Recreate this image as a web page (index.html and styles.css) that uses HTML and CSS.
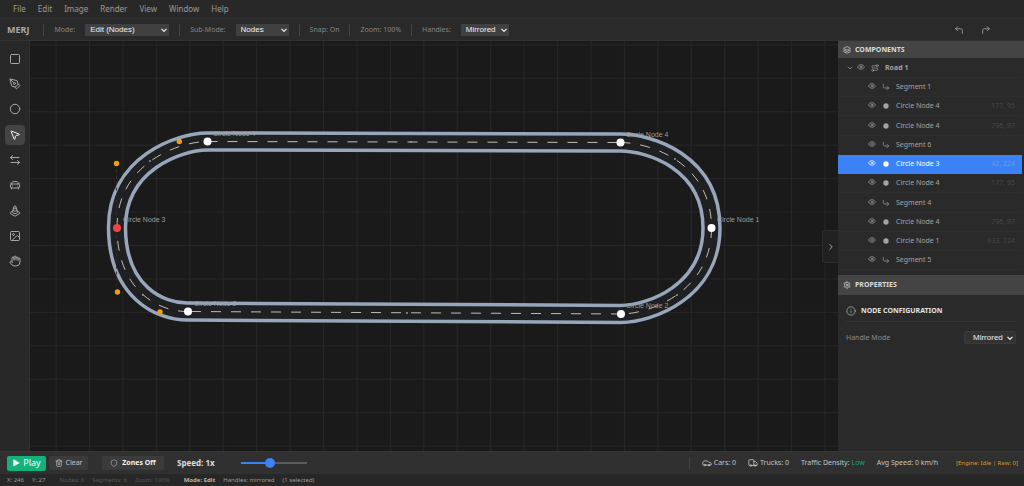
FILE: index.html
```html
<!DOCTYPE html>
<html lang="en">
<head>
<meta charset="utf-8">
<title>MERJ</title>
<link rel="stylesheet" href="styles.css">
</head>
<body>
<svg class="sprite" aria-hidden="true">
  <symbol id="eye" viewBox="0 0 24 24"><path d="M2 12.3a1 1 0 0 1 0-.7 10.8 10.8 0 0 1 20 0 1 1 0 0 1 0 .7 10.8 10.8 0 0 1-20 0"/><circle cx="12" cy="12" r="3"/></symbol>
  <symbol id="corner" viewBox="0 0 24 24"><path d="m15 10 5 5-5 5"/><path d="M4 4v7a4 4 0 0 0 4 4h12"/></symbol>
  <symbol id="dot" viewBox="0 0 24 24"><circle cx="12" cy="12" r="8" fill="currentColor" stroke="none"/></symbol>
  <symbol id="route" viewBox="0 0 24 24"><circle cx="5" cy="19" r="3"/><circle cx="19" cy="5" r="3"/><path d="M8 19h9.500a3.500 3.500 0 0 0 0-7h-11a3.500 3.500 0 0 1 0-7H16"/></symbol>
</svg>

<div class="app">
  <nav class="menubar">
    <button>File</button><button>Edit</button><button>Image</button><button>Render</button><button>View</button><button>Window</button><button>Help</button>
  </nav>

  <header class="toolbar">
    <strong class="brand">MERJ</strong>
    <i class="sep"></i>
    <label for="mode">Mode:</label>
    <select id="mode" class="select wide"><option>Edit (Nodes)</option></select>
    <i class="sep"></i>
    <label for="submode">Sub-Mode:</label>
    <select id="submode" class="select medium"><option>Nodes</option></select>
    <i class="sep"></i>
    <span class="snap">Snap: On</span>
    <i class="sep"></i>
    <span class="zoom">Zoom: 100%</span>
    <i class="sep"></i>
    <label for="handles">Handles:</label>
    <select id="handles" class="select small"><option>Mirrored</option></select>
    <div class="history">
      <button aria-label="Undo"><svg class="icon i10" viewBox="0 0 24 24"><path d="M9 14 4 9l5-5"/><path d="M20 20v-7a4 4 0 0 0-4-4H4"/></svg></button>
      <button aria-label="Redo"><svg class="icon i10" viewBox="0 0 24 24"><path d="m15 14 5-5-5-5"/><path d="M4 20v-7a4 4 0 0 1 4-4h12"/></svg></button>
    </div>
  </header>

  <main class="workspace">
    <aside class="tools">
      <div class="tool-group">
        <button aria-label="Rectangle"><svg class="icon i12" viewBox="0 0 24 24"><rect x="3" y="3" width="18" height="18" rx="2"/></svg></button>
        <button aria-label="Pen"><svg class="icon i12" viewBox="0 0 24 24"><path d="M15.700 21.300a1 1 0 0 1-1.400 0l-1.600-1.600a1 1 0 0 1 0-1.400l5.600-5.600a1 1 0 0 1 1.400 0l1.600 1.600a1 1 0 0 1 0 1.400z"/><path d="m18 13-1.400-6.900a1 1 0 0 0-.7-.7L3.200 2a1 1 0 0 0-1.200 1.200l3.500 12.700a1 1 0 0 0 .7.7L13 18"/><path d="m2.300 2.300 7.300 7.300"/><circle cx="11" cy="11" r="2"/></svg></button>
        <button aria-label="Circle"><svg class="icon i12" viewBox="0 0 24 24"><circle cx="12" cy="12" r="9.500"/></svg></button>
      </div>
      <div class="tool-group">
        <button class="active" aria-label="Select"><svg class="icon i12" viewBox="0 0 24 24"><path d="M4 4.700a.5.5 0 0 1 .7-.7l16 6.500a.5.5 0 0 1-.1.900l-6.100 1.600a2 2 0 0 0-1.400 1.400l-1.600 6.100a.5.5 0 0 1-.9.100z"/></svg></button>
        <button aria-label="Direction"><svg class="icon i12" viewBox="0 0 24 24"><path d="m7 3-4 4 4 4M3 7h17M17 13l4 4-4 4M21 17H4"/></svg></button>
        <button aria-label="Vehicles"><svg class="icon i12" viewBox="0 0 24 24"><path d="m21 8-2 2-1.500-3.700A2 2 0 0 0 15.600 5H8.400a2 2 0 0 0-1.900 1.300L5 10 3 8M7 14h.01M17 14h.01"/><rect x="3" y="10" width="18" height="8" rx="2"/><path d="M5 18v2M19 18v2"/></svg></button>
      </div>
      <div class="tool-group">
        <button aria-label="Cones"><svg class="icon i12" viewBox="0 0 24 24"><path d="M9.300 6.200a4.600 4.600 0 0 0 5.400 0M7.900 10.700c.9.800 2.400 1.300 4.100 1.300s3.200-.5 4.100-1.300M13.900 3.500a1.900 1.900 0 0 0-3.800-.1l-3 10c-.1.200-.1.400-.1.600 0 1.700 2.200 3 5 3s5-1.300 5-3c0-.2 0-.4-.1-.5Z"/><path d="m7.500 12.200-4.700 2.700c-.5.300-.8.700-.8 1.100s.3.800.8 1.100l7.600 4.500c.9.500 2.100.5 3 0l7.600-4.500c.7-.3 1-.7 1-1.100s-.3-.8-.8-1.100l-4.700-2.800"/></svg></button>
        <button aria-label="Image"><svg class="icon i12" viewBox="0 0 24 24"><rect x="3" y="3" width="18" height="18" rx="2"/><circle cx="9" cy="9" r="2"/><path d="m21 15-3.100-3.100a2 2 0 0 0-2.800 0L6 21"/></svg></button>
        <button aria-label="Pan"><svg class="icon i12" viewBox="0 0 24 24"><path d="M18 11V6a2 2 0 0 0-4 0M14 10V4a2 2 0 0 0-4 0v2M10 10.500V6a2 2 0 0 0-4 0v8"/><path d="M18 8a2 2 0 1 1 4 0v6a8 8 0 0 1-8 8h-2c-2.800 0-4.500-.9-6-2.300l-3.600-3.600a2 2 0 0 1 2.800-2.800L7 15"/></svg></button>
      </div>
    </aside>

    <section class="canvas">
      <svg class="scene" role="img" aria-label="Road network">
        <defs>
          <pattern id="grid" x="25.600" y="3.400" width="33.430" height="33.430" patternUnits="userSpaceOnUse">
            <path class="grid-line" d="M.5 0V34M0 .5H34"/>
          </pattern>
          <path id="loop" d="M177.500 100.500 590.500 101.500C618 101.500 681.500 120 681.500 187C681.500 251 619 273 591 273L158 270.500C130 271 87.500 251 87 187C86.500 122.500 149 100.500 177.500 100.500Z"/>
        </defs>
        <rect width="100%" height="100%" fill="url(#grid)"/>
        <use href="#loop" class="road-edge"/>
        <use href="#loop" class="road-bed"/>
        <g class="lane">
          <path d="M177.500 100.500 590.500 101.500"/>
          <path d="M590.500 101.500C618 101.500 681.500 120 681.500 187"/>
          <path d="M681.500 187C681.500 251 619 273 591 273"/>
          <path d="M591 273 158 270.500"/>
          <path d="M158 270.500C130 271 87.500 251 87 187"/>
          <path d="M87 187C86.500 122.500 149 100.500 177.500 100.500"/>
        </g>
        <g class="mid">
          <circle cx="381" cy="101" r="1"/><circle cx="645" cy="118" r="1"/><circle cx="377" cy="272" r="1"/><circle cx="120" cy="120" r="1"/><circle cx="113" cy="254" r="1"/><circle cx="647" cy="254" r="1"/>
        </g>
        <path class="handle-line" d="M86.500 122.500V251"/>
        <g class="handle">
          <circle cx="149.300" cy="100.500" r="2.700"/><circle cx="86.500" cy="122.500" r="2.700"/><circle cx="87.500" cy="251" r="2.700"/><circle cx="130" cy="271" r="2.700"/>
        </g>
        <g class="label">
          <text x="183" y="95">Circle Node 4</text>
          <text x="596" y="96">Circle Node 4</text>
          <text x="687" y="181">Circle Node 1</text>
          <text x="596" y="267">Circle Node 2</text>
          <text x="164" y="265">Circle Node 2</text>
          <text x="93" y="181">Circle Node 3</text>
        </g>
        <g class="node">
          <circle cx="177.500" cy="100.500" r="4"/><circle cx="590.500" cy="101.500" r="4"/><circle cx="681.500" cy="187" r="4"/><circle cx="591" cy="273" r="4"/><circle cx="158" cy="270.500" r="4"/>
          <circle class="picked" cx="87" cy="187" r="4"/>
        </g>
      </svg>
      <button class="collapse" aria-label="Collapse panel"><svg class="icon i10" viewBox="0 0 24 24"><path d="m9 18 6-6-6-6"/></svg></button>
    </section>

    <aside class="panel">
      <section class="components">
        <h2><svg class="icon i8" viewBox="0 0 24 24"><path d="M12.800 2.200a2 2 0 0 0-1.600 0L2.600 6.100a1 1 0 0 0 0 1.800l8.600 3.900a2 2 0 0 0 1.600 0l8.600-3.900a1 1 0 0 0 0-1.800zM2 12l9.200 4.300a2 2 0 0 0 1.600 0L22 12M2 17l9.200 4.300a2 2 0 0 0 1.600 0L22 17"/></svg>COMPONENTS</h2>
        <ul class="tree">
          <li class="road"><svg class="icon i8 chevron" viewBox="0 0 24 24"><path d="m6 9 6 6 6-6"/></svg><svg class="icon i8 eye"><use href="#eye"/></svg><svg class="icon i8"><use href="#route"/></svg><span>Road 1</span></li>
          <li><svg class="icon i8 eye"><use href="#eye"/></svg><svg class="icon i8"><use href="#corner"/></svg><span>Segment 1</span></li>
          <li><svg class="icon i8 eye"><use href="#eye"/></svg><svg class="icon i8"><use href="#dot"/></svg><span>Circle Node 4</span><small>177, 95</small></li>
          <li><svg class="icon i8 eye"><use href="#eye"/></svg><svg class="icon i8"><use href="#dot"/></svg><span>Circle Node 4</span><small>796, 97</small></li>
          <li><svg class="icon i8 eye"><use href="#eye"/></svg><svg class="icon i8"><use href="#corner"/></svg><span>Segment 6</span></li>
          <li class="selected"><svg class="icon i8 eye"><use href="#eye"/></svg><svg class="icon i8"><use href="#dot"/></svg><span>Circle Node 3</span><small>42, 224</small></li>
          <li><svg class="icon i8 eye"><use href="#eye"/></svg><svg class="icon i8"><use href="#dot"/></svg><span>Circle Node 4</span><small>177, 95</small></li>
          <li><svg class="icon i8 eye"><use href="#eye"/></svg><svg class="icon i8"><use href="#corner"/></svg><span>Segment 4</span></li>
          <li><svg class="icon i8 eye"><use href="#eye"/></svg><svg class="icon i8"><use href="#dot"/></svg><span>Circle Node 4</span><small>796, 97</small></li>
          <li><svg class="icon i8 eye"><use href="#eye"/></svg><svg class="icon i8"><use href="#dot"/></svg><span>Circle Node 1</span><small>933, 224</small></li>
          <li><svg class="icon i8 eye"><use href="#eye"/></svg><svg class="icon i8"><use href="#corner"/></svg><span>Segment 5</span></li>
        </ul>
      </section>
      <section class="properties">
        <h2><svg class="icon i8" viewBox="0 0 24 24"><path d="M9.700 4.100a2.300 2.300 0 0 1 4.600 0 2.300 2.300 0 0 0 3.300 1.900 2.300 2.300 0 0 1 2.300 4 2.300 2.300 0 0 0 0 3.900 2.300 2.300 0 0 1-2.300 4 2.300 2.300 0 0 0-3.300 2 2.300 2.300 0 0 1-4.600 0 2.300 2.300 0 0 0-3.300-2 2.300 2.300 0 0 1-2.300-4 2.300 2.300 0 0 0 0-3.900 2.300 2.300 0 0 1 2.300-4 2.300 2.300 0 0 0 3.300-1.900"/><circle cx="12" cy="12" r="3"/></svg>PROPERTIES</h2>
        <div class="props-body">
          <h3><svg class="icon i10" viewBox="0 0 24 24"><circle cx="12" cy="12" r="10"/><path d="M12 16v-4M12 8h.01"/></svg>NODE CONFIGURATION</h3>
          <div class="field">
            <label for="handle-mode">Handle Mode</label>
            <select id="handle-mode" class="select dark"><option>Mirrored</option></select>
          </div>
        </div>
      </section>
    </aside>
  </main>

  <footer class="controls">
    <button class="btn play"><svg class="icon i8" viewBox="0 0 24 24"><path fill="currentColor" d="M5 3v18l16-9z"/></svg>Play</button>
    <button class="btn clear"><svg class="icon i8" viewBox="0 0 24 24"><path d="M3 6h18M19 6v14a2 2 0 0 1-2 2H7a2 2 0 0 1-2-2V6M8 6V4a2 2 0 0 1 2-2h4a2 2 0 0 1 2 2v2M10 11v6M14 11v6"/></svg>Clear</button>
    <button class="btn zones"><svg class="icon i8" viewBox="0 0 24 24"><path d="M20 13c0 5-3.500 7.500-7.700 9a1 1 0 0 1-.7 0C7.500 20.500 4 18 4 13V6a1 1 0 0 1 1-1c2 0 4.500-1.200 6.200-2.700a1.200 1.200 0 0 1 1.500 0C14.500 3.800 17 5 19 5a1 1 0 0 1 1 1z"/></svg>Zones Off</button>
    <label class="speed" for="speed">Speed: 1x</label>
    <input id="speed" class="slider" type="range" min="0" max="100" value="43">
    <div class="stats">
      <i class="sep"></i>
      <span class="stat"><svg class="icon i10" viewBox="0 0 24 24"><path d="M19 17h2c.6 0 1-.4 1-1v-3c0-.9-.7-1.700-1.500-1.900C18.700 10.600 16 10 16 10s-1.300-1.400-2.200-2.300c-.5-.4-1.100-.7-1.800-.7H5c-.6 0-1.100.4-1.400.9l-1.400 2.900A3.700 3.700 0 0 0 2 12v4c0 .6.4 1 1 1h2"/><circle cx="7" cy="17" r="2"/><path d="M9 17h6"/><circle cx="17" cy="17" r="2"/></svg>Cars: 0</span>
      <span class="stat"><svg class="icon i10" viewBox="0 0 24 24"><path d="M14 18V6a2 2 0 0 0-2-2H4a2 2 0 0 0-2 2v11a1 1 0 0 0 1 1h2M15 18H9M19 18h2a1 1 0 0 0 1-1v-3.700a1 1 0 0 0-.2-.6l-3.500-4.300A1 1 0 0 0 17.500 8H14"/><circle cx="17" cy="18" r="2"/><circle cx="7" cy="18" r="2"/></svg>Trucks: 0</span>
      <span class="stat">Traffic Density: <b class="low">Low</b></span>
      <span class="stat">Avg Speed: 0 km/h</span>
      <span class="engine">[Engine: Idle | Raw: 0]</span>
    </div>
  </footer>

  <div class="status">
    <span class="pos">X: 246</span><span class="pos">Y: 27</span>
    <span class="counts"><span>Nodes: 6</span><span>Segments: 6</span><span>Zoom: 100%</span></span>
    <span class="current"><b>Mode: Edit</b><span>Handles: mirrored</span><span>(1 selected)</span></span>
  </div>
</div>
</body>
</html>
```

FILE: styles.css
```css
* { box-sizing: border-box; }
body {
  margin: 0;
  background: #2a2a2a;
  color: #a3a3a3;
  font: 7px/10px "Noto Sans", "Open Sans", sans-serif;
}
button, select, input { margin: 0; padding: 0; border: 0; font: inherit; color: inherit; background: none; }
h2, h3, ul { margin: 0; padding: 0; }
ul { list-style: none; }
.sprite { position: absolute; width: 0; height: 0; }
.icon { flex: none; fill: none; stroke: currentColor; stroke-width: 2; stroke-linecap: round; stroke-linejoin: round; }
.i8 { width: 8px; height: 8px; }
.i10 { width: 10px; height: 10px; }
.i12 { width: 12px; height: 12px; }
.sep { flex: none; width: 1px; height: 12px; background: #444; }

.app { display: flex; flex-direction: column; height: 100vh; overflow: hidden; }

.menubar { display: flex; gap: 12px; height: 19px; padding: 0 13px; align-items: center; font-size: 8px; color: #9a9a9a; background: #282828; border-bottom: 1px solid #2f2f2f; }

.toolbar { display: flex; align-items: center; gap: 10px; height: 22px; padding: 1px 33px 0 7px; background: #2a2a2a; border-bottom: 1px solid #323232; color: #858585; }
.brand { margin-right: 4px; font-size: 9px; color: #a8a8a8; }
.select {
  appearance: none;
  height: 12px;
  padding: 0 10px 0 5px;
  border-radius: 1px;
  background: #404040 url("data:image/svg+xml,%3Csvg xmlns='http://www.w3.org/2000/svg' viewBox='0 0 8 8'%3E%3Cpath d='M1.500 2.800 4 5.300 6.500 2.800' fill='none' stroke='%23f0f0f0' stroke-width='1.200'/%3E%3C/svg%3E") no-repeat right 1px center / 8px 8px;
  color: #f0f0f0;
  font: 8px/10px "Liberation Sans", Arial, sans-serif;
}
.wide { width: 84px; }
.medium { width: 53px; }
.small { width: 48px; }
.dark { width: 52px; height: 13px; padding-left: 8px; background-color: #333; border: 1px solid #3a3a3a; border-radius: 2px; }
.history { display: flex; gap: 17px; margin-left: auto; color: #a3a3a3; }
.history button, .tools button, .collapse { display: grid; place-items: center; }

.workspace { display: flex; flex: 1; min-height: 0; }
.tools { display: flex; flex-direction: column; gap: 6px; width: 30px; padding-top: 8px; align-items: center; background: #282828; border-right: 1px solid #303030; color: #a8a8a8; }
.tool-group { display: grid; gap: 5px; }
.tools button { width: 20px; height: 20px; border-radius: 4px; }
.tools .active { background: #444; color: #f5f5f5; }

.canvas { position: relative; flex: 1; min-width: 0; background: #1a1a1a; }
.scene { display: block; width: 100%; height: 100%; }
.grid-line { fill: none; stroke: #262626; }
.road-edge { fill: none; stroke: #98a6bb; stroke-width: 20.500; }
.road-bed { fill: none; stroke: #1f2022; stroke-width: 13.500; }
.lane { fill: none; stroke: #c4beb0; stroke-width: 1; stroke-dasharray: 10 10; }
.mid { fill: #8d9a9a; }
.handle-line { fill: none; stroke: #3c2d2b; stroke-dasharray: 3 3; }
.handle { fill: #f39c12; }
.node { fill: #fff; }
.picked { fill: #ef4444; }
.label { fill: #9c9c9c; font: 7px "Liberation Sans", Arial, sans-serif; }
.collapse { position: absolute; right: 0; top: 189px; width: 16px; height: 33px; background: #212121; border: 1px solid #2b2b2b; border-right: 0; border-radius: 3px 0 0 3px; color: #b8b8b8; }

.panel { display: flex; flex-direction: column; width: 186px; flex: none; background: #2a2a2a; }
.components { flex: 4 1 0; min-height: 0; display: flex; flex-direction: column; }
.properties { flex: 3 1 0; min-height: 0; }
h2 { display: flex; flex: none; align-items: center; gap: 4px; height: 17px; padding: 0 5px; background: #444; color: #dcdcdc; font-size: 7px; }
.properties h2 { height: 20px; }
.tree { flex: 1; overflow: hidden; padding-right: 2px; }
.tree li { display: flex; align-items: center; height: 19px; padding: 0 7px 0 30px; gap: 6px; border-bottom: 1px solid #2e2e2e; }
.tree li:nth-child(4n) { height: 20px; }
.tree .road { height: 20px; padding-left: 8px; font-weight: bold; }
.tree .chevron { margin-right: -3px; }
.eye { margin-bottom: 2px; }
.tree small { margin-left: auto; font-size: 7px; color: #474747; }
.tree .selected { background: #3b82f6; border-color: #3b82f6; color: #fff; }
.tree .selected small { color: #6f9be0; }
.props-body { padding: 8px; }
h3 { display: flex; align-items: center; gap: 5px; padding: 3px 0 5px; border-bottom: 1px solid #333; color: #e2e2e2; font-size: 7px; }
h3 .icon { color: #a3a3a3; }
.field { display: flex; align-items: center; justify-content: space-between; padding-top: 9px; color: #8c8c8c; }

.controls { display: flex; align-items: center; height: 23px; padding: 0 6px 0 7px; background: #303030; border-top: 1px solid #363636; color: #c4c4c4; }
.btn { display: flex; align-items: center; justify-content: center; gap: 3px; height: 14px; border-radius: 2px; background: #3b3b3b; }
.play { width: 39px; height: 15px; background: #14b17d; color: #fff; font-size: 9px; }
.clear { width: 39px; margin-left: 3px; }
.zones { width: 62px; margin-left: 14px; gap: 4px; font-weight: bold; color: #f5f5f5; }
.zones .icon { color: #b0b0b0; }
.speed { margin-left: 13px; font-size: 8px; font-weight: bold; color: #dedede; }
.slider { appearance: none; width: 66px; height: 10px; margin-left: 26px; background: linear-gradient(to right, #3b82f6 43%, #5a5a5a 43%) no-repeat center / 100% 2px; }
.slider::-webkit-slider-thumb { appearance: none; width: 10px; height: 10px; border-radius: 50%; background: #3b82f6; }
.stats { display: flex; align-items: center; gap: 12px; margin-left: auto; }
.stat { display: flex; align-items: center; gap: 2px; }
.low { font-weight: normal; color: #16a679; }
.engine { margin-left: 6px; font-size: 6px; color: #d69a2d; }

.status { display: flex; align-items: center; height: 12px; padding: 0 7px; gap: 8px; background: #272727; color: #999; font-size: 6px; }
.counts, .current { display: flex; gap: 8px; margin-left: 6px; }
.counts { color: #555; }
.current b { color: #b5b5b5; }
```
